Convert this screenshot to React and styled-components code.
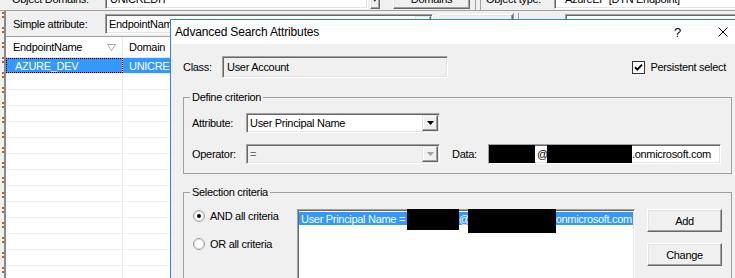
import React from 'react';
import styled, { createGlobalStyle } from 'styled-components';

const Global = createGlobalStyle`
  html, body { margin: 0; padding: 0; background: #f0f0f0; }
  body {
    width: 735px; height: 278px; overflow: hidden;
    font-family: "Liberation Sans", Arial, sans-serif;
    font-size: 11px; letter-spacing: -0.3px; color: #000;
  }
  #root { width: 735px; height: 278px; overflow: hidden; }
`;

const Desktop = styled.div`
  position: relative;
  width: 735px;
  height: 278px;
  overflow: hidden;
  background: #f0f0f0;
`;

/* ---------- background application ---------- */
const AppWindow = styled.div`
  display: flex;
  flex-direction: column;
  margin-top: -13px;
`;

const ToolRow = styled.div`
  display: flex;
  align-items: center;
  flex-shrink: 0;
  height: ${p => p.$h}px;
  padding-left: ${p => p.$pl}px;
  border-bottom: ${p => (p.$line ? '1px solid #a0a0a0' : 'none')};
  white-space: nowrap;
`;

const Lower = styled.div`
  display: flex;
  flex: 1;
`;

const Splitter = styled.div`
  width: 6px;
  flex-shrink: 0;
  height: 300px;
  background:
    linear-gradient(#8a8a8a, #8a8a8a) 4px 0 / 2px 100% no-repeat,
    repeating-linear-gradient(to bottom, transparent 0 1px, #b8661a 1px 3px, transparent 3px 5px, #b8661a 5px 7px, transparent 7px 15px) 2px 0 / 2px 100% no-repeat,
    #f0f0f0;
`;

const ContentColumn = styled.div`
  flex: 1;
  display: flex;
  flex-direction: column;
`;

const Label = styled.span`
  flex-shrink: 0;
  width: ${p => (p.$w ? `${p.$w}px` : 'auto')};
  margin-left: ${p => p.$ml || 0}px;
  white-space: nowrap;
  color: ${p => (p.$muted ? '#6d6d6d' : '#000')};
`;

const Sunken = styled.div`
  box-sizing: border-box;
  flex-shrink: 0;
  width: ${p => p.$w}px;
  height: ${p => p.$h || 20}px;
  margin-left: ${p => p.$ml || 0}px;
  border: 1px solid;
  border-color: #a0a0a0 #ffffff #ffffff #a0a0a0;
  box-shadow: inset 1px 1px 0 #696969, inset -1px -1px 0 #e3e3e3;
  background: ${p => p.$bg || '#ffffff'};
  color: ${p => (p.$muted ? '#6d6d6d' : '#000')};
  display: flex;
  align-items: center;
  padding-left: ${p => (p.$pl ?? 3)}px;
  padding-right: 1px;
  white-space: nowrap;
  overflow: hidden;
`;

const FieldText = styled.span`
  flex: 1;
  overflow: hidden;
`;

const RaisedButton = styled.button`
  box-sizing: border-box;
  flex-shrink: 0;
  width: ${p => p.$w}px;
  height: ${p => p.$h}px;
  margin: 0 0 0 ${p => p.$ml || 0}px;
  padding: 0;
  font: inherit;
  letter-spacing: inherit;
  color: #000;
  background: #f0f0f0;
  border: 1px solid;
  border-color: #ffffff #696969 #696969 #ffffff;
  box-shadow: inset -1px -1px 0 #a0a0a0, inset 1px 1px 0 #e3e3e3;
  display: flex;
  align-items: center;
  justify-content: center;
`;

const DropButton = styled.span`
  box-sizing: border-box;
  width: 16px;
  height: 16px;
  flex-shrink: 0;
  background: #f0f0f0;
  border: 1px solid;
  border-color: #e3e3e3 #696969 #696969 #e3e3e3;
  box-shadow: inset -1px -1px 0 #a0a0a0, inset 1px 1px 0 #ffffff;
  display: flex;
  align-items: center;
  justify-content: center;
`;

const Separator = styled.span`
  flex-shrink: 0;
  width: 6px;
  height: 22px;
  margin-left: ${p => p.$ml || 0}px;
  border-left: 1px solid #a0a0a0;
  border-right: 1px solid #a0a0a0;
  box-sizing: border-box;
`;

const Grid = styled.div`
  display: flex;
  flex-direction: column;
  background: #ffffff;
  border-top: 1px solid #a0a0a0;
`;

const GridRow = styled.div`
  display: flex;
  height: ${p => (p.$header ? 20 : 15)}px;
  border-bottom: 1px solid ${p => (p.$header ? '#e5e5e5' : '#f0f0f0')};
  background: ${p => (p.$selected ? '#3399ff' : '#ffffff')};
  color: ${p => (p.$selected ? '#ffffff' : '#000')};
`;

const GridCell = styled.div`
  box-sizing: border-box;
  width: ${p => (p.$w ? `${p.$w}px` : 'auto')};
  flex: ${p => (p.$w ? 'none' : 1)};
  display: flex;
  align-items: center;
  padding-left: ${p => p.$pl || 7}px;
  padding-right: 6px;
  border-right: ${p => (p.$w ? '1px solid #ececec' : 'none')};
  outline: ${p => (p.$focus ? '1px dotted #000' : 'none')};
  outline-offset: -1px;
  white-space: nowrap;
  overflow: hidden;
`;

const CellText = styled.span`
  flex: 1;
`;

/* ---------- dialog ---------- */
const Dialog = styled.div`
  position: absolute;
  left: 170px;
  top: 19px;
  width: 576px;
  height: 300px;
  box-sizing: border-box;
  border: 1px solid #2b88d8;
  background: #f0f0f0;
  display: flex;
  flex-direction: column;
`;

const TitleBar = styled.div`
  height: 24px;
  flex-shrink: 0;
  background: #ffffff;
  display: flex;
  align-items: center;
`;

const Title = styled.div`
  flex: 1;
  padding-left: 4px;
  font-size: 12px;
  letter-spacing: -0.15px;
`;

const CaptionButton = styled.div`
  width: 45px;
  height: 24px;
  display: flex;
  align-items: center;
  justify-content: center;
  font-size: 13px;
  letter-spacing: 0;
`;

const DialogBody = styled.div`
  flex: 1;
  display: flex;
  flex-direction: column;
  padding: 12px 13px 0 12px;
`;

const ClassRow = styled.div`
  display: flex;
  align-items: center;
  height: 22px;
`;

const CheckLabel = styled.label`
  display: flex;
  align-items: center;
  gap: 5px;
  margin-left: auto;
  margin-right: 6px;
  white-space: nowrap;
`;

const GroupBox = styled.fieldset`
  margin: ${p => p.$mt}px 0 0;
  padding: 0;
  min-width: 0;
  border: 1px solid #a0a0a0;
  flex-shrink: 0;
`;

const Legend = styled.legend`
  margin-left: 6px;
  padding: 0 2px;
  line-height: 13px;
`;

const GroupInner = styled.div`
  display: flex;
  flex-direction: ${p => p.$dir || 'column'};
  gap: ${p => p.$gap || 0}px;
  padding: ${p => p.$pad};
`;

const FormRow = styled.div`
  display: flex;
  align-items: center;
  height: 20px;
`;

const Redact = styled.span`
  display: inline-block;
  flex-shrink: 0;
  width: ${p => p.$w}px;
  height: ${p => p.$h}px;
  margin: ${p => p.$m};
  background: #000;
`;

const RadioColumn = styled.div`
  width: 104px;
  flex-shrink: 0;
  display: flex;
  flex-direction: column;
  gap: 14px;
`;

const RadioItem = styled.label`
  display: flex;
  align-items: center;
  gap: 5px;
  height: 14px;
  white-space: nowrap;
`;

const ListBox = styled.div`
  box-sizing: border-box;
  width: 338px;
  height: 90px;
  flex-shrink: 0;
  border: 1px solid;
  border-color: #a0a0a0 #ffffff #ffffff #a0a0a0;
  box-shadow: inset 1px 1px 0 #696969, inset -1px -1px 0 #e3e3e3;
  background: #ffffff;
  padding: 1px 1px 0 1px;
`;

const ListItem = styled.div`
  display: flex;
  align-items: center;
  height: 13px;
  margin-top: 1px;
  padding-left: 2px;
  background: ${p => (p.$selected ? '#3399ff' : 'transparent')};
  color: ${p => (p.$selected ? '#ffffff' : '#000')};
  white-space: nowrap;
`;

const ButtonColumn = styled.div`
  display: flex;
  flex-direction: column;
  gap: 11px;
  margin-left: 12px;
`;

const Arrow = ({ muted }) => (
  <svg width="7" height="4" viewBox="0 0 7 4">
    <path d="M0 0h7L3.5 4z" fill={muted ? '#a0a0a0' : '#000'} />
  </svg>
);

const SortGlyph = () => (
  <svg width="9" height="7" viewBox="0 0 9 7">
    <path d="M0.5 0.5h8L4.5 6.5z" fill="none" stroke="#a9a9a9" strokeWidth="1" />
  </svg>
);

const CloseIcon = () => (
  <svg width="10" height="10" viewBox="0 0 10 10">
    <path d="M0.5 0.5l9 9M9.5 0.5l-9 9" stroke="#000" strokeWidth="1" />
  </svg>
);

const CheckBox = () => (
  <svg width="13" height="13" viewBox="0 0 13 13">
    <rect x="0.5" y="0.5" width="12" height="12" fill="#fff" stroke="#333" />
    <path d="M3 6.2l2.3 2.4L10 3.6" fill="none" stroke="#000" strokeWidth="1.8" />
  </svg>
);

const Radio = ({ checked }) => (
  <svg width="12" height="12" viewBox="0 0 12 12">
    <circle cx="6" cy="6" r="5.5" fill="#fff" stroke="#9a9a9a" />
    <circle cx="6" cy="6" r="4.5" fill="none" stroke="#d8d8d8" />
    {checked && <circle cx="6" cy="6" r="2" fill="#000" />}
  </svg>
);

const gridRows = Array.from({ length: 14 });

export default function App() {
  return (
    <>
      <Global />
      <Desktop>
        <AppWindow>
          <ToolRow $h={23} $pl={12} $line>
            <Label $w={93}>Object Domains:</Label>
            <Sunken $w={263} $pl={4}>UNICREDIT</Sunken>
            <RaisedButton $w={10} $h={20} $ml={2}>▾</RaisedButton>
            <RaisedButton $w={77} $h={20} $ml={13}>Domains</RaisedButton>
            <Separator $ml={5} />
            <Label $w={68} $ml={5}>Object type:</Label>
            <Sunken $w={200} $pl={10}>AzureEP [DTN Endpoint]</Sunken>
          </ToolRow>
          <Lower>
            <Splitter />
            <ContentColumn>
              <ToolRow $h={25} $pl={7}>
                <Label $w={92}>Simple attribute:</Label>
                <Sunken $w={328} $pl={3}>
                  <FieldText>EndpointName</FieldText>
                  <DropButton><Arrow /></DropButton>
                </Sunken>
                <RaisedButton $w={75} $h={20} $ml={5}>Apply</RaisedButton>
                <Separator />
                <Sunken $w={200} $ml={46}>&nbsp;</Sunken>
              </ToolRow>
              <Grid>
                <GridRow $header>
                  <GridCell $w={117}>
                    <CellText>EndpointName</CellText>
                    <SortGlyph />
                  </GridCell>
                  <GridCell $pl={6}>Domain</GridCell>
                </GridRow>
                <GridRow $selected>
                  <GridCell $w={117} $pl={9} $focus>AZURE_DEV</GridCell>
                  <GridCell $pl={6}>UNICREDIT</GridCell>
                </GridRow>
                {gridRows.map((_, i) => (
                  <GridRow key={i}>
                    <GridCell $w={117} />
                    <GridCell />
                  </GridRow>
                ))}
              </Grid>
            </ContentColumn>
          </Lower>
        </AppWindow>

        <Dialog>
          <TitleBar>
            <Title>Advanced Search Attributes</Title>
            <CaptionButton>?</CaptionButton>
            <CaptionButton><CloseIcon /></CaptionButton>
          </TitleBar>
          <DialogBody>
            <ClassRow>
              <Label $w={39}>Class:</Label>
              <Sunken $w={226} $h={22} $bg="#f0f0f0" $pl={4}>User Account</Sunken>
              <CheckLabel>
                <CheckBox />
                <span>Persistent select</span>
              </CheckLabel>
            </ClassRow>

            <GroupBox $mt={13}>
              <Legend>Define criterion</Legend>
              <GroupInner $gap={11} $pad="9px 10px 9px 8px">
                <FormRow>
                  <Label $w={54}>Attribute:</Label>
                  <Sunken $w={194}>
                    <FieldText>User Principal Name</FieldText>
                    <DropButton><Arrow /></DropButton>
                  </Sunken>
                </FormRow>
                <FormRow>
                  <Label $w={54}>Operator:</Label>
                  <Sunken $w={194} $bg="#f0f0f0" $muted>
                    <FieldText>=</FieldText>
                    <DropButton><Arrow muted /></DropButton>
                  </Sunken>
                  <Label $w={36} $ml={12}>Data:</Label>
                  <Sunken $w={233} $pl={0}>
                    <Redact $w={47} $h={22} $m="0 2px 0 -1px" />
                    <span>@</span>
                    <Redact $w={85} $h={22} $m="-2px 0 0 -1px" />
                    <span>.onmicrosoft.com</span>
                  </Sunken>
                </FormRow>
              </GroupInner>
            </GroupBox>

            <GroupBox $mt={12}>
              <Legend>Selection criteria</Legend>
              <GroupInner $dir="row" $pad="10px 9px 0 9px">
                <RadioColumn>
                  <RadioItem><Radio checked /><span>AND all criteria</span></RadioItem>
                  <RadioItem><Radio /><span>OR all criteria</span></RadioItem>
                </RadioColumn>
                <ListBox>
                  <ListItem $selected>
                    <span>User Principal Name =&nbsp;</span>
                    <Redact $w={52} $h={21} $m="-3px 0 -5px -1px" />
                    <span>@</span>
                    <Redact $w={88} $h={24} $m="-3px 0 -8px -2px" />
                    <span>onmicrosoft.com</span>
                  </ListItem>
                </ListBox>
                <ButtonColumn>
                  <RaisedButton $w={75} $h={23}>Add</RaisedButton>
                  <RaisedButton $w={75} $h={23}>Change</RaisedButton>
                </ButtonColumn>
              </GroupInner>
            </GroupBox>
          </DialogBody>
        </Dialog>
      </Desktop>
    </>
  );
}
